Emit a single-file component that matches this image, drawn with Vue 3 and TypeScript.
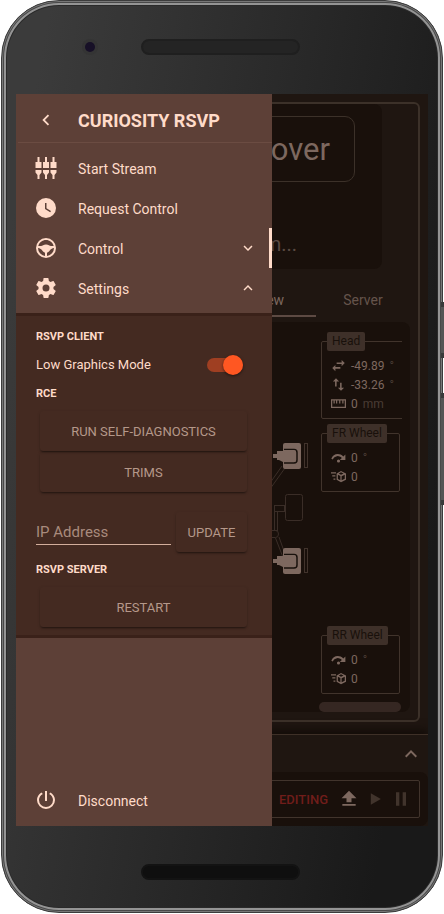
<script setup lang="ts">
import { ref } from 'vue'

interface MenuItem {
  label: string
  icon: string
  arrow?: 'down' | 'up'
}

interface Reading {
  icon: string
  value: string
  unit?: string
}

interface Readout {
  title: string
  kind: string
  rows: Reading[]
}

const icons: Record<string, string> = {
  stream:
    'M3.500 1h2v5H7.500v6h-6V6h2zM11 1h2v5h2v6H9V6h2zM18.500 1h2v5h2v6h-6V6h2zM1.500 14h6v2.500l-2 2.500v4h-2v-4l-2-2.500zM9 14h6v2.500l-2 2.500v4h-2v-4l-2-2.500zM16.500 14h6v2.500l-2 2.500v4h-2v-4l-2-2.500z',
  clock:
    'M12 2A10 10 0 0 0 2 12a10 10 0 0 0 10 10 10 10 0 0 0 10-10A10 10 0 0 0 12 2m4.200 14.200L11 13V7h1.500v5.200l4.500 2.700z',
  wheel:
    'M12 2a10 10 0 1 0 0 20 10 10 0 0 0 0-20m0 2c3.700 0 6.800 2.500 7.700 6H17c-1.500 0-2.500-1.500-5-1.500S8.500 10 7 10H4.300C5.200 6.500 8.300 4 12 4m-8 8c3.500 0 4.500 4 7 4.700v3.200a8 8 0 0 1-7-7.900m16 0a8 8 0 0 1-7 7.900v-3.200c2.500-.7 3.500-4.700 7-4.700',
  gear:
    'M12 15.500A3.500 3.500 0 0 1 8.500 12 3.500 3.500 0 0 1 12 8.500a3.500 3.500 0 0 1 3.500 3.500 3.500 3.500 0 0 1-3.500 3.500m7.430-2.530c.04-.32.07-.64.07-.97s-.03-.66-.07-1l2.110-1.630c.19-.15.24-.42.12-.64l-2-3.460c-.12-.22-.39-.31-.61-.22l-2.490 1c-.52-.39-1.060-.73-1.690-.98l-.37-2.650A.506.506 0 0 0 14 2h-4c-.25 0-.46.18-.5.42l-.37 2.650c-.63.25-1.170.59-1.690.98l-2.490-1c-.22-.09-.49 0-.61.22l-2 3.460c-.13.22-.07.49.12.64L4.570 11c-.04.34-.07.67-.07 1s.03.65.07.97l-2.110 1.660c-.19.15-.25.42-.12.64l2 3.460c.12.22.39.3.61.22l2.490-1.010c.52.4 1.060.74 1.690.99l.37 2.650c.04.24.25.42.5.42h4c.25 0 .46-.18.5-.42l.37-2.650c.63-.26 1.170-.59 1.690-.99l2.490 1.010c.22.08.49 0 .61-.22l2-3.460c.12-.22.07-.49-.12-.64z',
  power:
    'M16.560 4.440l-1.450 1.450A6.970 6.970 0 0 1 19 12a7 7 0 0 1-7 7 7 7 0 0 1-7-7c0-2.680 1.500-4.960 3.880-6.120L7.440 4.440A8.960 8.960 0 0 0 3 12a9 9 0 0 0 9 9 9 9 0 0 0 9-9c0-3.220-1.860-5.920-4.440-7.560M13 3h-2v10h2',
  left: 'M15.410 16.580L10.830 12l4.580-4.590L14 6l-6 6 6 6z',
  down: 'M7.410 8.580L12 13.170l4.590-4.590L18 10l-6 6-6-6z',
  up: 'M7.410 15.410L12 10.830l4.590 4.580L18 14l-6-6-6 6z',
  horizontal: 'M22 8l-5-5v4H9v2.500h8V13zM2 16l5 5v-4h8v-2.500H7v-3.500z',
  vertical: 'M8 2l5 5H9v8H6.500V7H3zM16 22l-5-5h3.500V9H17v8h4z',
  ruler: 'M0 5h24v14H0zM2 7v10h20V7h-2v5h-2V7h-3v5h-2V7h-3v5H8V7H6v5H4V7z',
  rotate:
    'M12 15a2.500 2.500 0 1 1 0 5 2.500 2.500 0 0 1 0-5M23 7v9h-9l3.300-3.300A8.500 8.500 0 0 0 3 15L.5 14C3 6 13 3.500 19.700 10.300z',
  speed:
    'M0 5h8v2H0zM2 10h5v2H2zM4 15h3v2H4zM16 3l8 4v10l-8 4-7-4V7zM16 5.200L12.500 7l3.500 2 4-2zM11 9v6.800l4 2.200v-7zM22 9l-5 2.500V18l5-2.500z',
  upload: 'M9 16v-5H3l9-9 9 9h-6v5zM4 20v-2h16v2z',
  play: 'M7 5v14l12-7z',
  pause: 'M14 20h4V4h-4M6 20h4V4H6z',
}

const menu: MenuItem[] = [
  { label: 'Start Stream', icon: 'stream' },
  { label: 'Request Control', icon: 'clock' },
  { label: 'Control', icon: 'wheel', arrow: 'down' },
  { label: 'Settings', icon: 'gear', arrow: 'up' },
]

const wheelRows: Reading[] = [
  { icon: 'rotate', value: '0', unit: '°' },
  { icon: 'speed', value: '0' },
]

const readouts: Readout[] = [
  {
    title: 'Head',
    kind: 'wide',
    rows: [
      { icon: 'horizontal', value: '-49.89', unit: '°' },
      { icon: 'vertical', value: '-33.26', unit: '°' },
      { icon: 'ruler', value: '0', unit: 'mm' },
    ],
  },
  { title: 'FR Wheel', kind: 'front', rows: wheelRows },
  { title: 'RR Wheel', kind: 'rear', rows: wheelRows },
]

const lowGraphics = ref(true)
const address = ref('')
</script>

<template>
  <div class="page">
    <div class="phone">
      <span class="side-key power-key"></span>
      <span class="side-key volume-key"></span>
      <div class="top-bezel">
        <span class="camera"></span>
        <span class="speaker"></span>
      </div>

      <div class="screen">
        <main class="app">
          <section class="panel">
            <div class="video">
              <h2 class="video-title">Rover</h2>
              <p class="video-status">stream...</p>
            </div>
            <div class="tabs">
              <button type="button" class="tab tab-view">View</button>
              <button type="button" class="tab">Server</button>
            </div>
            <div class="model">
              <svg class="chassis" viewBox="0 0 40 140" aria-hidden="true">
                <g fill="none" stroke="#3a2d27">
                  <path d="M12 26L0 43M15 28L0 49" />
                  <rect x="15.500" y="54.500" width="17" height="26" rx="2" />
                  <rect x="4.500" y="65.500" width="10" height="6" />
                  <rect x="4.500" y="71.500" width="3" height="19" />
                  <path d="M0 90.500h5.500q3 0 3 3.500t-3 3.500H0M5.500 98l7 18M9 97l6 17" />
                </g>
                <g v-for="y in [0, 105]" :key="y" :transform="`translate(0 ${y})`">
                  <rect x="13" y="3" width="18" height="26" rx="2" fill="#7d685f" />
                  <path d="M14 9.500h10q3 0 3 3v7.500q0 3-3 3H14" fill="none" stroke="#19110c" stroke-width="1.500" />
                  <path d="M3 14h4v-3h6v-1h11q2 0 2 2v8q0 2-2 2H13l-4-2H7v-2H3z" fill="#7d685f" />
                  <rect x="34.500" y="3.500" width="3" height="24" fill="none" stroke="#41332c" />
                </g>
              </svg>
              <div class="readouts">
                <fieldset v-for="r in readouts" :key="r.title" class="readout" :class="r.kind">
                  <legend>{{ r.title }}</legend>
                  <div v-for="row in r.rows" :key="row.icon" class="reading">
                    <svg viewBox="0 0 24 24" aria-hidden="true">
                      <path fill-rule="evenodd" :d="icons[row.icon]" />
                    </svg>
                    <span>{{ row.value }}</span>
                    <span v-if="row.unit" class="unit">{{ row.unit }}</span>
                  </div>
                </fieldset>
                <div class="scrollbar"></div>
              </div>
            </div>
          </section>

          <footer class="sequence">
            <div class="sequence-head">
              <button type="button" class="plain" aria-label="Expand">
                <svg viewBox="0 0 24 24"><path :d="icons.up" /></svg>
              </button>
            </div>
            <div class="sequence-body">
              <div class="player">
                <strong>EDITING</strong>
                <button type="button" class="plain" aria-label="Upload">
                  <svg viewBox="0 0 24 24"><path :d="icons.upload" /></svg>
                </button>
                <button type="button" class="plain dim" aria-label="Play">
                  <svg viewBox="0 0 24 24"><path :d="icons.play" /></svg>
                </button>
                <button type="button" class="plain dim" aria-label="Pause">
                  <svg viewBox="0 0 24 24"><path :d="icons.pause" /></svg>
                </button>
              </div>
            </div>
          </footer>
        </main>

        <aside class="drawer">
          <header class="drawer-head">
            <button type="button" class="back" aria-label="Back">
              <svg viewBox="0 0 24 24"><path :d="icons.left" /></svg>
            </button>
            <h1>CURIOSITY RSVP</h1>
          </header>
          <nav class="menu">
            <button
              v-for="item in menu"
              :key="item.label"
              type="button"
              class="item"
              :class="{ marked: item.label === 'Control' }"
            >
              <svg class="icon" viewBox="0 0 24 24"><path fill-rule="evenodd" :d="icons[item.icon]" /></svg>
              <span>{{ item.label }}</span>
              <svg v-if="item.arrow" class="arrow" viewBox="0 0 24 24"><path :d="icons[item.arrow]" /></svg>
            </button>
          </nav>

          <section class="settings">
            <h3>RSVP CLIENT</h3>
            <div class="toggle-row">
              <label for="low-graphics">Low Graphics Mode</label>
              <input id="low-graphics" v-model="lowGraphics" type="checkbox" class="switch" />
            </div>
            <h3>RCE</h3>
            <div class="actions">
              <button type="button" class="action">RUN SELF-DIAGNOSTICS</button>
              <button type="button" class="action">TRIMS</button>
            </div>
            <div class="address-row">
              <input v-model="address" type="text" placeholder="IP Address" aria-label="IP Address" />
              <button type="button" class="action">UPDATE</button>
            </div>
            <h3>RSVP SERVER</h3>
            <div class="actions">
              <button type="button" class="action">RESTART</button>
            </div>
          </section>

          <button type="button" class="item disconnect">
            <svg class="icon" viewBox="0 0 24 24"><path :d="icons.power" /></svg>
            <span>Disconnect</span>
          </button>
        </aside>
      </div>

      <div class="bottom-bezel"><span class="speaker low"></span></div>
    </div>
  </div>
</template>

<style>
body {
  background: #fff;
}
</style>

<style scoped>
* {
  box-sizing: border-box;
}

.page {
  display: flex;
  min-height: 100vh;
  padding: 0 1px 1px;
  font-family: Roboto, "Liberation Sans", sans-serif;
}

h1,
h2,
h3,
p {
  margin: 0;
}

button,
input {
  font: inherit;
  color: inherit;
}

button {
  padding: 0;
  border: 0;
  background: none;
}

svg {
  display: block;
  fill: currentColor;
}

.phone {
  position: relative;
  display: flex;
  flex: 1;
  flex-direction: column;
  min-width: 0;
  padding: 0 14px;
  border: 1px solid #3c3c3c;
  border-radius: 58px;
  background: linear-gradient(100deg, #3b3b3b 8%, #191919 88%);
  box-shadow:
    inset 0 0 0 1px #777,
    inset 0 0 0 2px #484848,
    inset 0 0 0 4px #949494,
    inset 0 0 0 5px #2a2a2a;
}

.side-key {
  position: absolute;
  right: -2px;
  width: 3px;
  border: solid #3a3a3a;
  border-width: 5px 0;
  background: #555;
}

.power-key {
  top: 301px;
  height: 56px;
}

.volume-key {
  top: 392px;
  height: 112px;
}

.top-bezel {
  display: grid;
  grid-template-columns: 1fr auto 1fr;
  align-items: center;
  height: 93px;
  padding: 0 4px 2px 0;
}

.camera {
  width: 10px;
  height: 10px;
  margin-left: 69px;
  border-radius: 50%;
  background: #171027;
  box-shadow: 0 0 0 3px #343434;
}

.speaker {
  width: 159px;
  height: 16px;
  border: 2px solid #1f1f1f;
  border-radius: 8px;
  background: #242424;
}

.speaker.low {
  border-color: #131313;
  background: #0f0f0f;
}

.bottom-bezel {
  display: grid;
  place-items: center;
  height: 86px;
  padding: 6px 4px 0 0;
}

.screen {
  display: grid;
  flex: 1;
  grid-template-columns: minmax(0, 1fr);
  overflow: hidden;
}

.app,
.drawer {
  grid-area: 1 / 1;
}

/* Main view, dimmed behind the drawer */
.app {
  display: flex;
  flex-direction: column;
  padding-top: 8px;
  background: #1f1611;
  color: #7d685f;
}

.panel {
  display: flex;
  flex: 1;
  flex-direction: column;
  margin: 0 8px 12px;
  padding: 0 8px 8px;
  border: 2px solid #3c3129;
  border-radius: 6px;
}

.video {
  width: 320px;
  height: 165px;
  align-self: center;
  padding: 12px 27px;
  border-radius: 8px;
  background: #19100b;
  text-align: right;
}

.video-title {
  height: 66px;
  padding-right: 24px;
  border: 1px solid #3c3129;
  border-radius: 10px;
  font-size: 31px;
  font-weight: 400;
  line-height: 66px;
}

.video-status {
  padding: 48px 58px 0 0;
  color: #5a4a42;
  font-size: 20px;
  font-weight: 400;
  line-height: 28px;
}

.tabs {
  display: grid;
  grid-template-columns: repeat(4, 1fr);
  height: 32px;
  margin: 16px 0 5px;
}

.tab {
  border-bottom: 2px solid transparent;
  color: #65544c;
  font-size: 14px;
}

.tab-view {
  grid-column: 3;
  border-color: #5d4a43;
  color: #7d685f;
}

.model {
  display: flex;
  flex: 1;
  justify-content: flex-end;
  gap: 9px;
  padding: 10px 8px 0 0;
  border-radius: 8px;
  background: #19100b;
}

.chassis {
  width: 40px;
  height: 140px;
  margin-top: 108px;
}

.readouts {
  display: flex;
  flex-direction: column;
  width: 83px;
  padding-left: 2px;
  overflow: hidden;
}

.readout {
  width: 79px;
  min-width: 0;
  margin: 0;
  padding: 5px;
  border: 1px solid #41342c;
  border-radius: 2px;
  font-size: 12px;
}

.readout.wide {
  width: 96px;
  margin-bottom: 5px;
}

.readout.rear {
  margin-top: auto;
}

.readout legend {
  padding: 0 5px;
  border-radius: 2px;
  background: #3e3029;
  color: #19100b;
  line-height: 19px;
}

.reading {
  display: flex;
  align-items: center;
  gap: 5px;
  height: 19px;
  padding-left: 4px;
}

.reading svg {
  flex: none;
  width: 15px;
  height: 15px;
}

.unit {
  color: #4a3c34;
}

.scrollbar {
  flex: none;
  height: 10px;
  margin: 8px 1px 0 -2px;
  border-radius: 5px;
  background: #352722;
}

.sequence {
  border-top: 1px solid #3e3027;
  box-shadow: 0 -4px 8px #130c08;
}

.sequence-head {
  display: flex;
  align-items: center;
  justify-content: flex-end;
  height: 37px;
  padding-right: 5px;
}

.plain svg {
  width: 20px;
  height: 20px;
}

.sequence-head svg {
  width: 24px;
  height: 24px;
}

.plain.dim {
  color: #41342c;
}

.sequence-body {
  padding: 8px;
  border-radius: 8px;
  background: #19100b;
}

.player {
  display: flex;
  align-items: center;
  justify-content: flex-end;
  gap: 6px;
  height: 38px;
  padding-right: 8px;
  border: 1px solid #41342c;
  border-radius: 2px;
}

.player strong {
  margin-right: 5px;
  color: #701d1a;
  font-size: 13px;
  font-weight: 500;
}

/* Drawer */
.drawer {
  display: flex;
  flex-direction: column;
  width: 256px;
  padding-bottom: 6px;
  background: #5d4037;
  color: #ffdbc9;
}

.drawer-head {
  display: flex;
  align-items: center;
  gap: 21px;
  height: 49px;
  margin-left: 2px;
  padding: 4px 0 0 17px;
  border-bottom: 1px solid #6b4c42;
}

.back svg {
  width: 22px;
  height: 22px;
}

h1 {
  font-size: 18px;
  font-weight: 700;
}

.menu {
  padding: 5px 0;
}

.item {
  display: flex;
  align-items: center;
  gap: 20px;
  width: 100%;
  height: 40px;
  padding: 0 15px 0 18px;
  font-size: 14px;
  text-align: left;
}

.item span {
  padding-top: 2px;
}

.item.marked {
  border-right: 3px solid #ffdbc9;
  padding-right: 12px;
}

.icon {
  width: 24px;
  height: 24px;
}

.arrow {
  width: 18px;
  height: 18px;
  margin-left: auto;
}

.disconnect {
  margin-top: auto;
}

.settings {
  padding: 10px 20px 8px;
  border: solid #3a2119;
  border-width: 3px 0;
  background: #442a21;
}

h3 {
  padding-top: 2px;
  font-size: 11px;
  font-weight: 700;
  line-height: 18px;
}

.toggle-row {
  display: flex;
  align-items: center;
  justify-content: space-between;
  height: 37px;
  padding-right: 9px;
  font-size: 13px;
}

.switch {
  display: grid;
  align-content: center;
  width: 36px;
  height: 14px;
  margin: 0;
  appearance: none;
  border-radius: 7px;
  background: #9f3f22;
}

.switch::before {
  content: "";
  width: 20px;
  height: 20px;
  border-radius: 50%;
  background: #ff5722;
  box-shadow: 0 1px 3px #0008;
}

.switch:checked::before {
  justify-self: end;
}

.actions {
  display: grid;
  gap: 1px;
  padding: 8px 5px 0 4px;
}

.action {
  height: 40px;
  border-radius: 3px;
  box-shadow: 0 2px 2px -1px #0006, 0 1px 3px #0003;
  color: #b5988a;
  font-size: 13px;
}

.address-row {
  display: grid;
  grid-template-columns: 1fr 71px;
  gap: 5px;
  align-items: center;
  margin: 20px 5px 7px 0;
}

.address-row input {
  width: 100%;
  min-width: 0;
  height: 26px;
  padding: 0;
  border: 0;
  border-bottom: 1px solid #d3ae9c;
  background: none;
  font-size: 15px;
  outline: 0;
}

.address-row input::placeholder {
  color: #a98b7d;
  opacity: 1;
}
</style>
